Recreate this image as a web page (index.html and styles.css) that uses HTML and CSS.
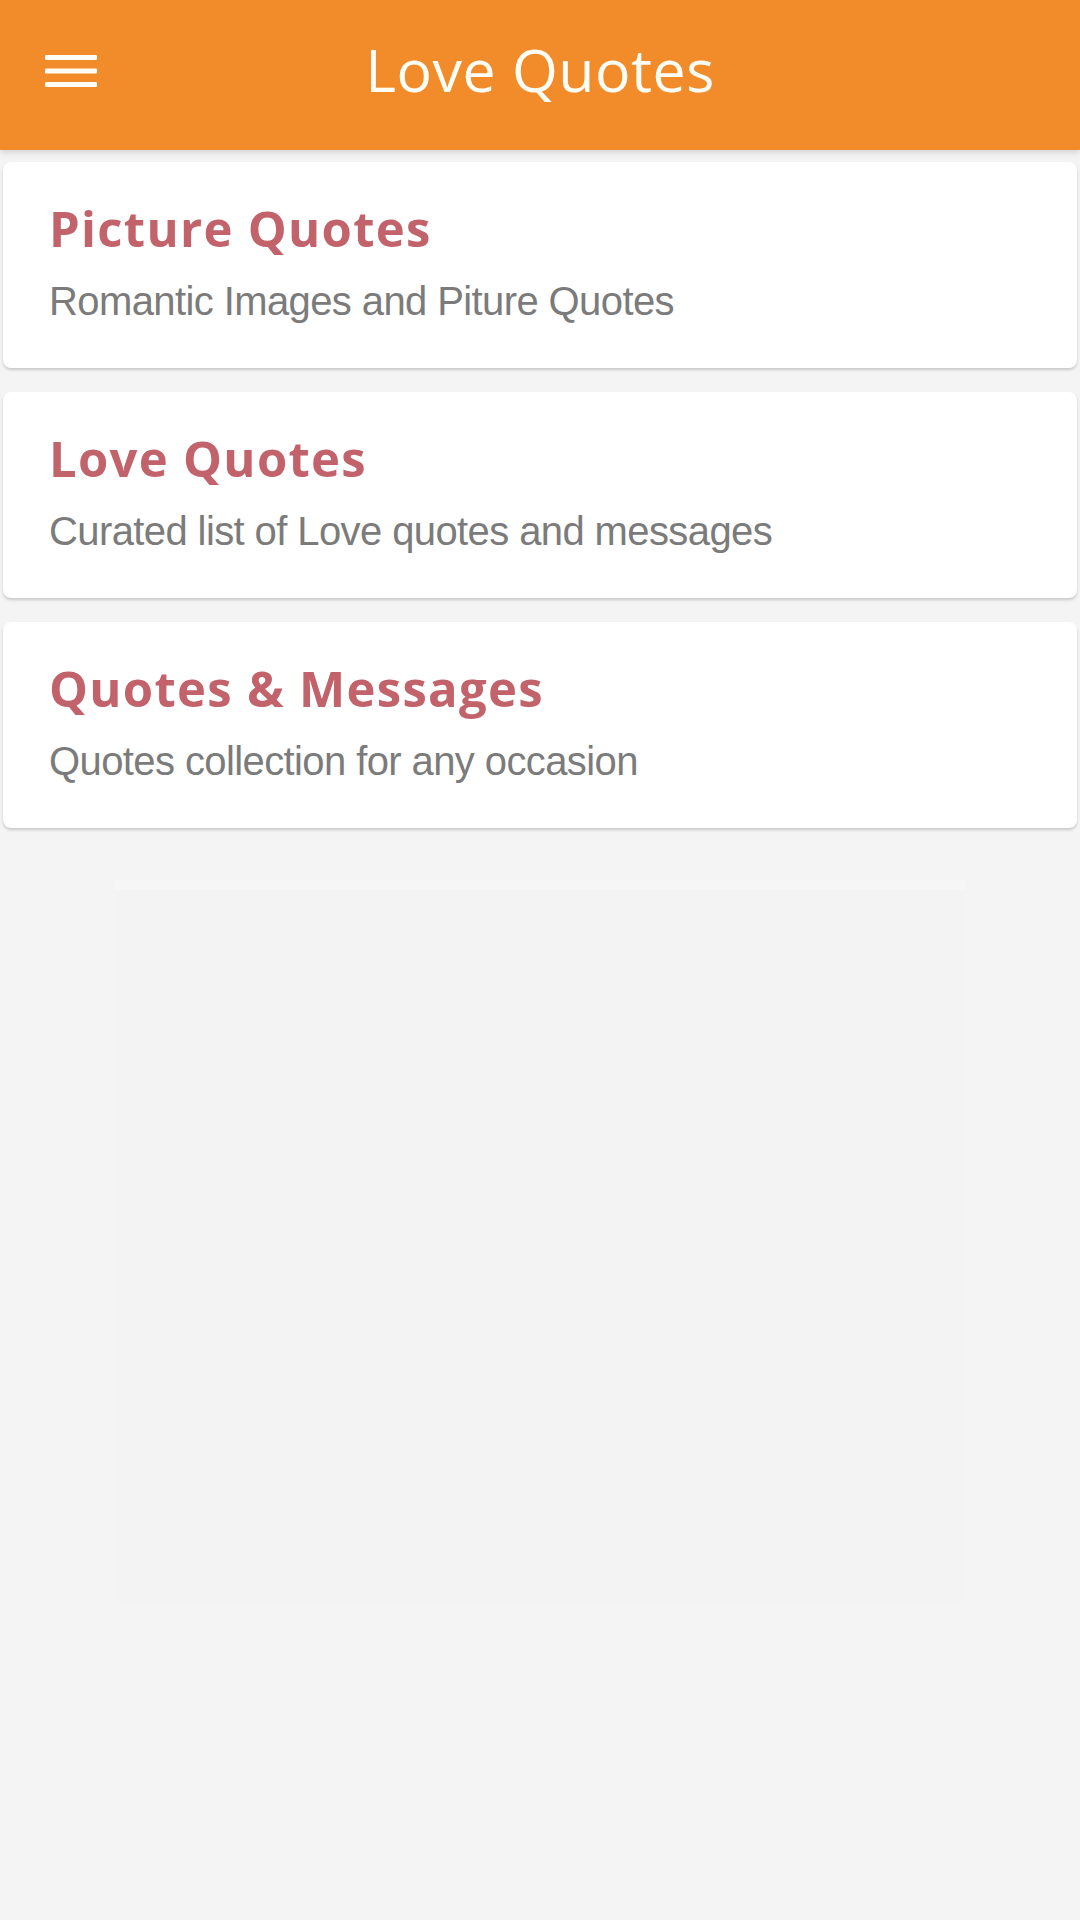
FILE: index.html
```html
<!DOCTYPE html>
<html lang="en">
<head>
    <meta charset="UTF-8" />
    <title>Love Quotes</title>
    <link rel="stylesheet" href="styles.css">
</head>
<body>
<div class="topbar">
    <div class="menu-btn">
        <svg width="52" height="34" viewBox="0 0 52 34">
            <rect x="0" y="0" width="52" height="5" rx="1" fill="#fffdf5" />
            <rect x="0" y="13.5" width="52" height="5" rx="1" fill="#fffdf5" />
            <rect x="0" y="27" width="52" height="5" rx="1" fill="#fffdf5" />
        </svg>
    </div>
    <h1 class="title">Love Quotes</h1>
</div>

<div class="list">
    <!-- categorias -->
    <div class="card">
        <h2>Picture Quotes</h2>
        <p>Romantic Images and Piture Quotes</p>
    </div>
    <div class="card">
        <h2>Love Quotes</h2>
        <p>Curated list of Love quotes and messages</p>
    </div>
    <div class="card">
        <h2>Quotes &amp; Messages</h2>
        <p>Quotes collection for any occasion</p>
    </div>
</div>

<div class="ad-box"></div>
</body>
</html>
```

FILE: styles.css
```css
body {
    margin: 0;
    background: #f4f4f4;
    font-family: "Open Sans", sans-serif;
    height: 1920px;
    overflow: hidden;
}
.topbar {
    height: 150px;
    background: #f28b2a;
    display: flex;
    align-items: center;
    position: relative;
    box-shadow: 0 3px 6px rgba(0, 0, 0, 0.12);
}
.menu-btn {
    padding-left: 45px;
    padding-bottom: 6px;
    display: flex;
}
.title {
    margin: 0;
    flex: 1;
    text-align: center;
    padding-right: 97px;
    padding-bottom: 12px;
    font-weight: 400;
    font-size: 59px;
    color: #fffdf5;
    letter-spacing: 0.5px;
}
.list {
    padding: 12px 3px 0 3px;
    display: flex;
    flex-direction: column;
    gap: 24px;
}
.card {
    background: white;
    border-radius: 8px;
    box-shadow: 0 2px 3px rgba(0, 0, 0, 0.18);
    height: 206px;
    box-sizing: border-box;
    padding: 34px 46px 0 46px;
}
.card h2 {
    margin: 0;
    font-size: 49px;
    font-weight: 700;
    color: #c2626b;
    line-height: 64px;
    letter-spacing: 1.3px;
}
.card p {
    margin: 19px 0 0 0;
    font-family: "Liberation Sans", sans-serif;
    font-size: 40px;
    color: #7b7b7b;
    line-height: 44px;
    letter-spacing: -0.6px;
}
.ad-box {
    margin: 52px auto 0 auto;
    width: 850px;
    height: 712px;
    background: #f3f3f3;
    border-top: 10px solid #f6f6f6;
}
```
